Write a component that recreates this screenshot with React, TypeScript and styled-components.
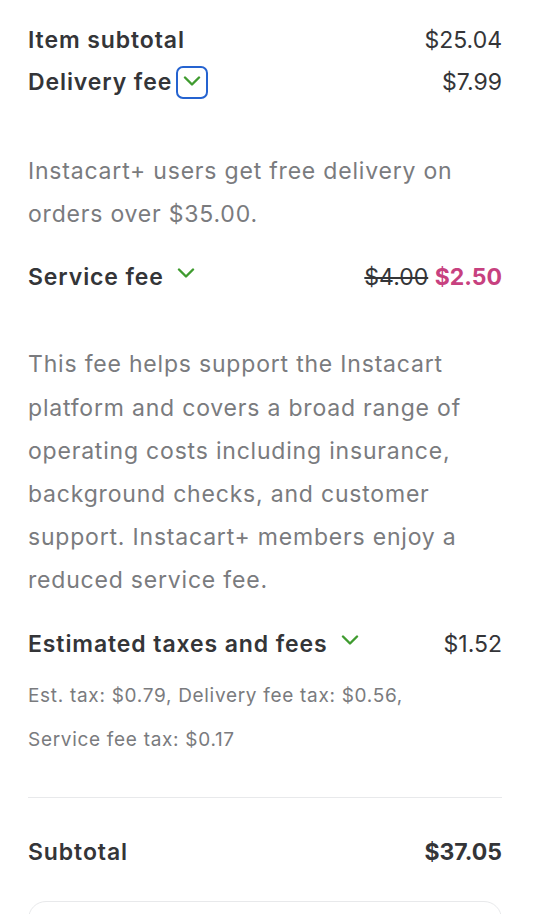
import React, { FC, ReactNode } from "react";
import styled, { createGlobalStyle } from "styled-components";

const GlobalStyle = createGlobalStyle`
  html, body {
    margin: 0;
    padding: 0;
    background: #ffffff;
  }

  body {
    font-family: Inter, "Open Sans", Arial, sans-serif;
    color: #343538;
    -webkit-font-smoothing: antialiased;
  }
`;

const Chevron: FC = () => (
  <svg width="18" height="10" viewBox="0 0 18 10" fill="none">
    <path
      d="M2 1.5 L9 8.5 L16 1.5"
      stroke="#3f9b2f"
      strokeWidth="2.4"
      strokeLinecap="round"
      strokeLinejoin="round"
    />
  </svg>
);

type LineProps = {
  label: string;
  toggle?: "focused" | "plain";
  bold?: boolean;
  children: ReactNode;
};

const Line: FC<LineProps> = ({ label, toggle, bold, children }) => (
  <Row>
    <Label>
      {label}
      {toggle && (
        <Toggle focused={toggle === "focused"} aria-label={`toggle ${label}`}>
          <Chevron />
        </Toggle>
      )}
    </Label>
    <Amount bold={bold}>{children}</Amount>
  </Row>
);

export default function App() {
  return (
    <>
      <GlobalStyle />
      <Summary>
        <Line label="Item subtotal">$25.04</Line>
        <Line label="Delivery fee" toggle="focused">
          $7.99
        </Line>
        <Note>
          Instacart+ users get free delivery on orders over $35.00.
        </Note>

        <Line label="Service fee" toggle="plain">
          <Struck>$4.00</Struck> <Discount>$2.50</Discount>
        </Line>
        <Note wide>
          This fee helps support the Instacart platform and covers a broad
          range of operating costs including insurance, background checks, and
          customer support. Instacart+ members enjoy a reduced service fee.
        </Note>

        <Line label="Estimated taxes and fees" toggle="plain">
          $1.52
        </Line>
        <Breakdown>
          Est. tax: $0.79, Delivery fee tax: $0.56,
          <br />
          Service fee tax: $0.17
        </Breakdown>

        <Divider />

        <Total>
          <Line label="Subtotal" bold>
            $37.05
          </Line>
        </Total>

        <Card />
      </Summary>
    </>
  );
}

const Summary = styled.div`
  display: flex;
  flex-direction: column;
  padding: 19px 37px 0 28px;
  height: 914px;
  box-sizing: border-box;
  overflow: hidden;
`;

const Row = styled.div`
  display: flex;
  align-items: center;
  justify-content: space-between;
  min-height: 42px;
`;

const Label = styled.div`
  display: flex;
  align-items: center;
  font-size: 23px;
  font-weight: 600;
  letter-spacing: 0.9px;
  color: #343538;
`;

const Toggle = styled.button<{ focused: boolean }>`
  display: flex;
  align-items: center;
  justify-content: center;
  width: 32px;
  height: 33px;
  margin-left: ${({ focused }) => (focused ? "4px" : "6px")};
  padding: 0;
  padding-bottom: ${({ focused }) => (focused ? "2px" : "8px")};
  box-sizing: border-box;
  background: transparent;
  border: ${({ focused }) => (focused ? "2.5px solid #2563d0" : "none")};
  border-radius: 7px;
  cursor: pointer;
`;

const Amount = styled.div<{ bold?: boolean }>`
  font-size: 23px;
  font-weight: ${({ bold }) => (bold ? 700 : 400)};
  color: #343538;
  white-space: nowrap;
`;

const Struck = styled.span`
  text-decoration: line-through;
  font-weight: 400;
`;

const Discount = styled.span`
  font-weight: 700;
  color: #c7417f;
`;

const Note = styled.p<{ wide?: boolean }>`
  margin: 47px 0 20px;
  margin-top: ${({ wide }) => (wide ? "45px" : "47px")};
  font-size: 23px;
  letter-spacing: 0.8px;
  line-height: 43.2px;
  color: #7a7b7e;
`;

const Breakdown = styled.p`
  margin: 9px 0 35px;
  font-size: 19px;
  letter-spacing: 0.7px;
  line-height: 44px;
  color: #7a7b7e;
`;

const Divider = styled.hr`
  margin: 0;
  border: none;
  border-top: 1px solid #e8e9eb;
`;

const Total = styled.div`
  margin-top: 33px;
`;

const Card = styled.div`
  margin-top: 28px;
  height: 120px;
  border: 1px solid #e8e9eb;
  border-radius: 18px;
  flex-shrink: 0;
`;
